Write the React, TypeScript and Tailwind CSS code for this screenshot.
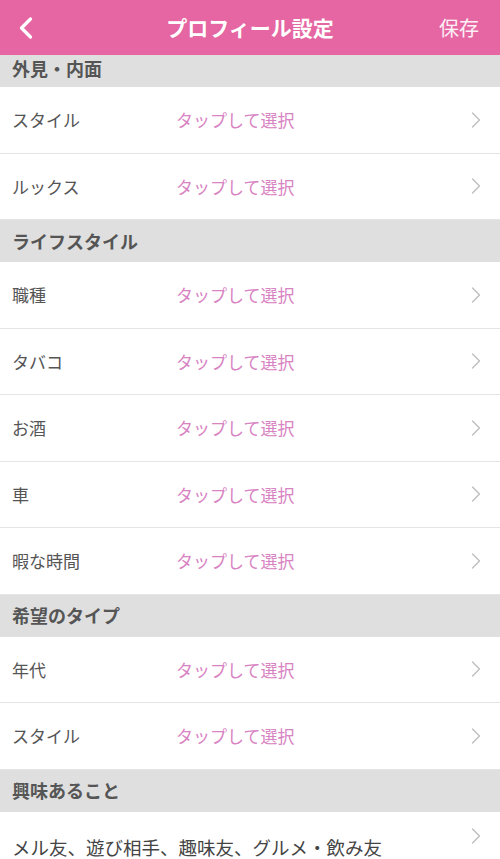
import {ChevronLeft, ChevronRight} from 'lucide-react';

type Section = {
  title: string;
  rows: string[];
};

const sections: Section[] = [
  {title: '外見・内面', rows: ['スタイル', 'ルックス']},
  {title: 'ライフスタイル', rows: ['職種', 'タバコ', 'お酒', '車', '暇な時間']},
  {title: '希望のタイプ', rows: ['年代', 'スタイル']},
];

const font = {fontFamily: '"Noto Sans CJK JP", "Noto Sans", sans-serif'};

function SectionHeader({title, first}: {title: string; first?: boolean}) {
  if (first) {
    // partly scrolled under the nav bar
    return (
      <div className="h-[32px] bg-[#dfdfdf] px-3 pt-[4px]">
        <span className="block leading-none text-[18px] font-bold text-[#555555]">{title}</span>
      </div>
    );
  }
  return (
    <div className="h-[42px] flex items-center bg-[#dfdfdf] px-3">
      <span className="text-[18px] font-bold text-[#555555]">{title}</span>
    </div>
  );
}

function Row({label}: {label: string}) {
  return (
    <div className="h-[66.5px] flex items-center bg-white border-b border-[#e4e4e4] px-3">
      <span className="w-[164px] text-[17px] text-[#555555]">{label}</span>
      <span className="flex-1 text-[17px] text-[#d883c2]">タップして選択</span>
      <ChevronRight className="w-[28px] h-[28px] text-[#bfbfbf] -mr-[2px]" strokeWidth={1.2} />
    </div>
  );
}

export default function App() {
  return (
    <div className="w-[500px] h-[859px] overflow-hidden bg-white" style={font}>
      <div className="h-[55px] bg-[#e566a2] flex items-center justify-between px-3 relative">
        <ChevronLeft className="w-[36px] h-[36px] text-white -ml-[4px]" strokeWidth={2.2} />
        <span className="absolute left-0 right-0 text-center text-[21px] font-bold text-white pointer-events-none">
          プロフィール設定
        </span>
        <span className="text-[20px] text-white/90 mr-[9px]">保存</span>
      </div>

      {sections.map((s, i) => (
        <div key={s.title}>
          <SectionHeader title={s.title} first={i === 0} />
          {s.rows.map((r) => (
            <Row key={r} label={r} />
          ))}
        </div>
      ))}

      <SectionHeader title="興味あること" />
      <div className="h-[80px] bg-white flex px-3 relative">
        <span className="mt-[22px] text-[18.5px] text-[#444444]">
          メル友、遊び相手、趣味友、グルメ・飲み友
        </span>
        <ChevronRight
          className="absolute right-[10px] top-[10px] w-[28px] h-[28px] text-[#bfbfbf]"
          strokeWidth={1.2}
        />
      </div>
    </div>
  );
}
